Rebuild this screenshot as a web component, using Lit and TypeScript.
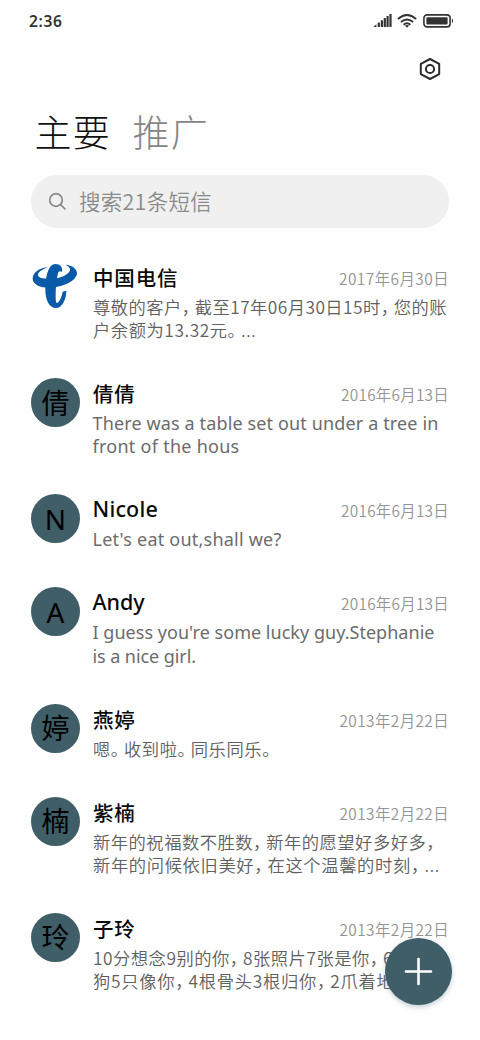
import { LitElement, html, css, svg } from "lit";
import { customElement, property, query } from "lit/decorators.js";

/** A single line of text whose tracking is adjusted to fill a given advance width. */
@customElement("text-line")
class TextLine extends LitElement {
  static styles = css`
    :host { display: block; white-space: pre; }
    .run { display: inline-block; }
    .punct { margin-right: -0.27em; }
    .dots { font-family: "Noto Sans", sans-serif; font-size: 1.2em; line-height: 1; }
  `;
  @property() text = "";
  @property({ type: Number }) width = 0;
  @query(".run") run!: HTMLElement;

  updated() {
    if (!this.width) return;
    this.run.style.letterSpacing = "0px";
    const natural = this.run.getBoundingClientRect().width;
    const spacing = (this.width - natural) / Math.max(1, this.text.length);
    this.run.style.letterSpacing = `${spacing.toFixed(3)}px`;
  }

  render() {
    const parts = this.text.split(/([\uFF0C\u3002\u2026])/);
    return html`<span class="run">${parts.map((p) =>
      p === "\uFF0C" || p === "\u3002" ? html`<span class="punct">${p}</span>`
        : p === "\u2026" ? html`<span class="dots">${p}</span>` : p)}</span>`;
  }
}

interface Line { text: string; width: number; }
interface Thread { avatar: string; name: Line; date: Line; lines: Line[]; }

const L = (text: string, width: number): Line => ({ text, width });
const isLatin = (text: string) => /^[\x00-\x7f]*$/.test(text);

const threads: Thread[] = [
  { avatar: "", name: L("中国电信", 85.5), date: L("2017年6月30日", 110),
    lines: [L("尊敬的客户\uFF0C截至17年06月30日15时\uFF0C您的账", 354), L("户余额为13.32元。…", 163.5)] },
  { avatar: "倩", name: L("倩倩", 42.5), date: L("2016年6月13日", 108),
    lines: [L("There was a table set out under a tree in", 346), L("front of the hous", 147)] },
  { avatar: "N", name: L("Nicole", 65.5), date: L("2016年6月13日", 108),
    lines: [L("Let's eat out,shall we?", 189)] },
  { avatar: "A", name: L("Andy", 52), date: L("2016年6月13日", 108),
    lines: [L("I guess you're some lucky guy.Stephanie", 342), L("is a nice girl.", 103.5)] },
  { avatar: "婷", name: L("燕婷", 42.5), date: L("2013年2月22日", 109.5),
    lines: [L("嗯。收到啦。同乐同乐。", 182.4)] },
  { avatar: "楠", name: L("紫楠", 42.5), date: L("2013年2月22日", 109.5),
    lines: [L("新年的祝福数不胜数\uFF0C新年的愿望好多好多\uFF0C", 346.4), L("新年的问候依旧美好\uFF0C在这个温馨的时刻\uFF0C…", 347)] },
  { avatar: "玲", name: L("子玲", 42.5), date: L("2013年2月22日", 109.5),
    lines: [L("10分想念9别的你\uFF0C8张照片7张是你\uFF0C6", 300), L("狗5只像你\uFF0C4根骨头3根归你\uFF0C2爪着地", 301.5)] },
];

const signalIcon = svg`<svg class="signal" viewBox="0 0 19 14" width="19" height="14">
  <g fill="#333"><path d="M.3 13 3.4 10.2V13z"/><rect x="4.700" y="8.600" width="2.200" height="4.400" rx=".5"/><rect x="7.800" y="6.200" width="2.200" height="6.800" rx=".5"/><rect x="10.700" y="4" width="2.200" height="9" rx=".5"/><rect x="13.500" y="2" width="2.200" height="11" rx=".5"/><rect x="16.400" y="0" width="2.200" height="13" rx=".5"/></g></svg>`;

const wifiIcon = svg`<svg class="wifi" viewBox="0 0 20 14" width="20" height="14">
  <g fill="none" stroke="#333" stroke-width="1.9"><path d="M.9 5Q10-2.9 19.1 5"/><path d="M3.900 8Q10 2.800 16.100 8"/><path d="M6.600 10.700Q10 7.900 13.400 10.700"/></g><path d="M7.900 11.600Q10 10.200 12.100 11.600L10 13.800z" fill="#333"/></svg>`;

const batteryIcon = svg`<svg class="battery" viewBox="0 0 31 14" width="31" height="14">
  <rect x=".9" y=".9" width="26.200" height="12" rx="3.200" fill="none" stroke="#333" stroke-width="1.6"/><rect x="3.400" y="3.300" width="21.200" height="7.200" rx="1" fill="#333"/><path d="M28.900 4.800c1.500.2 1.500 4 0 4.200z" fill="#333"/></svg>`;

const telecomLogo = svg`<svg viewBox="33 36 147 147" width="49" height="49"><g fill="#0a5aaa">
  <path d="M84 52C60 53 38 67 38 86C38 103 60 113 88 113C125 112 165 96 171 72C173 58 157 45 136 44C148 50 154 57 148 65C140 76 120 85 98 86C72 87 53 84 54 74C55 65 68 58 84 52Z"/>
  <path d="M106 42C121 42 129 51 126 66C120 62 115 64 113 74C109 92 107 112 107 136C107 150 108 160 111 159C118 156 125 141 128 125L139 122C139 150 125 174 108 174C88 174 76 150 76 120C76 78 86 42 106 42Z"/></g></svg>`;

@customElement("app-root")
class AppRoot extends LitElement {
  static styles = css`
    :host {
      display: block; position: relative; width: 480px; height: 1040px; overflow: hidden;
      background: #fefefe; color: #000;
      font-family: "Noto Sans", "Noto Sans CJK SC", sans-serif;
    }
    .status { display: flex; align-items: center; height: 42px; padding: 0 26px 0 29px; }
    .time { flex: 1; font: 600 15.5px/20px "Noto Sans", sans-serif; color: #333; }
    .signal { margin-right: 5px; }
    .wifi { margin-right: 6px; }
    .toolbar { display: flex; justify-content: flex-end; padding: 14px 37px 0 0; height: 26px; }
    .tabs { display: flex; gap: 21.5px; padding: 19px 0 0 34.5px; height: 60px;
      font-family: "Noto Sans CJK SC Light", "Noto Sans CJK SC", sans-serif; font-weight: 300;
      font-size: 37px; line-height: 60px; color: #111; }
    .tabs .other { color: #858585; }
    .search { display: flex; align-items: center; margin: 13.5px 31px 0; height: 53px; border-radius: 27px;
      background: #f0f0f0; color: #8a8a8a; font-size: 21.5px; line-height: 30px;
      font-family: "Noto Sans CJK SC", sans-serif; font-weight: 350; }
    .search svg { margin: 0 12px 0 17px; }
    .threads { padding: 34.3px 31px 0; display: flex; flex-direction: column; gap: 36.7px; }
    .thread { display: flex; }
    .avatar { flex: none; display: flex; align-items: center; justify-content: center; width: 49px; height: 49px;
      margin-right: 13px; border-radius: 50%; background: #3f5e68; font-size: 28px; line-height: 40px;
      font-family: "Noto Sans", "Noto Sans CJK SC", sans-serif; }
    .avatar.logo { background: #fff; }
    .body { flex: 1; min-width: 0; margin-top: 1px; }
    .head { display: flex; justify-content: space-between; height: 28px; line-height: 28px; margin-bottom: 4px; }
    .name { font-size: 20.5px; line-height: 30px; font-weight: 500; color: #0a0a0a; }
    .name.latin { font-size: 21.5px; line-height: 28px; margin-left: -0.5px; }
    .date { font-size: 15.4px; line-height: 31px; color: #949494; font-weight: 350; font-family: "Noto Sans CJK SC", sans-serif; }
    .line { font-size: 17.3px; line-height: 23.3px; height: 23.3px; color: #606060; font-weight: 350;
      font-family: "Noto Sans CJK SC", sans-serif; }
    .line.latin { font-size: 18px; line-height: 24px; font-weight: 400; color: #6c6c6c; font-family: "Noto Sans", sans-serif; margin-left: -0.5px; }
    .fab { position: absolute; left: 385px; top: 938px; width: 67px; height: 67px; border-radius: 50%;
      background: #3f5e68; box-shadow: 0 2px 5px rgba(63, 94, 120, .3); display: flex; align-items: center; justify-content: center; }
  `;

  thread(t: Thread) {
    return html`<div class="thread">
      <div class="avatar ${t.avatar ? "" : "logo"}">${t.avatar || telecomLogo}</div>
      <div class="body">
        <div class="head">
          <text-line class="name ${isLatin(t.name.text) ? "latin" : ""}" .text=${t.name.text} .width=${t.name.width}></text-line>
          <text-line class="date" .text=${t.date.text} .width=${t.date.width}></text-line>
        </div>
        ${t.lines.map((l) => html`<text-line class="line ${isLatin(l.text) ? "latin" : ""}" .text=${l.text} .width=${l.width}></text-line>`)}
      </div>
    </div>`;
  }

  render() {
    return html`
      <div class="status">
        <text-line class="time" .text=${"2:36"} .width=${33.5}></text-line>
        ${signalIcon}${wifiIcon}${batteryIcon}
      </div>
      <div class="toolbar">
        <svg width="26" height="26" viewBox="-13 -13 26 26" fill="none" stroke="#2c2c2c" stroke-width="2" stroke-linejoin="round">
          <path d="M0-10 9.200-5.100V5.100L0 10-9.200 5.100V-5.100z"/><circle r="4.100"/>
        </svg>
      </div>
      <div class="tabs">
        <text-line .text=${"主要"} .width=${76.5}></text-line>
        <text-line class="other" .text=${"推广"} .width=${76.5}></text-line>
      </div>
      <div class="search">
        <svg width="19" height="19" viewBox="0 0 19 19" fill="none" stroke="#8a8a8a" stroke-width="1.7" stroke-linecap="round">
          <circle cx="8" cy="8" r="6.300"/><path d="M12.600 12.600 17 17"/>
        </svg>
        <text-line .text=${"搜索21条短信"} .width=${133}></text-line>
      </div>
      <div class="threads">${threads.map((t) => this.thread(t))}</div>
      <div class="fab">
        <svg width="29" height="29" viewBox="-14.500 -14.500 29 29" stroke="#fff" stroke-width="2.600" stroke-linecap="round"><path d="M-12.500 0H12.500M0-12.500V12.500"/></svg>
      </div>`;
  }
}
